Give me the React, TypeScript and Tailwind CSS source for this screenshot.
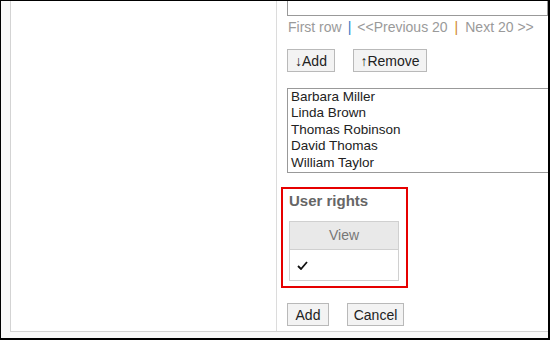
import { Fragment } from "react";

const members = ["Barbara Miller", "Linda Brown", "Thomas Robinson", "David Thomas", "William Taylor"];

const Btn = ({ label, className = "" }: { label: string; className?: string }) => (
  <button
    className={`h-[23px] border border-[#b9b9b9] bg-[#f3f3f3] text-[14px] leading-none text-[#222] ${className}`}
  >
    {label}
  </button>
);

const CheckIcon = () => (
  <svg width="11" height="9" viewBox="0 0 11 9">
    <path d="M1 5 L4 8 L10 1" fill="none" stroke="#111" strokeWidth="1.8" />
  </svg>
);

export default function App() {
  return (
    <div
      className="w-[550px] h-[340px] border border-r-2 border-b-2 border-black bg-[#f9f9f9] flex flex-col"
      style={{ fontFamily: '"Liberation Sans", Arial, sans-serif' }}
    >
      <div className="flex-1 ml-[9px] mb-[6px] flex border-l border-b border-[#d3d3d3] bg-white overflow-hidden">
        {/* left column */}
        <div className="w-[266px] border-r border-[#dcdcdc]" />

        {/* right column */}
        <div className="flex-1 pl-[10px] flex flex-col">
          <div className="h-[15px] border-x border-b border-[#999]" />

          <div className="mt-[3px] h-[17px] flex items-center text-[14px] text-[#9a9a9a] whitespace-nowrap">
            <span className="ml-[1px]">First row</span>
            <span className="mx-[6px] text-[#2f7bc4]">|</span>
            <span>&lt;&lt;Previous 20</span>
            <span className="mx-[7px] text-[#d0862b]">|</span>
            <span>Next 20 &gt;&gt;</span>
          </div>

          <div className="mt-[13px] flex gap-[18px]">
            <Btn label="↓Add" className="w-[48px]" />
            <Btn label="↑Remove" className="w-[74px]" />
          </div>

          <div className="mt-[16px] h-[85px] border border-r-0 border-[#999] pl-[3px] pt-[0px] text-[13.5px] leading-[16.4px] text-[#222]">
            {members.map((m) => (
              <Fragment key={m}>
                <div>{m}</div>
              </Fragment>
            ))}
          </div>

          <div className="mt-[14px] -ml-[6px] w-[127px] h-[101px] border-2 border-[#e60000] pl-[6px] pt-[3px]">
            <div className="text-[15px] font-bold text-[#666] leading-[18px]">User rights</div>
            <table className="mt-[11px] w-[110px] border-collapse text-[14px]">
              <thead>
                <tr>
                  <th className="h-[28px] border border-[#d0d0d0] bg-[#e9e9e9] font-normal text-[#777]">View</th>
                </tr>
              </thead>
              <tbody>
                <tr>
                  <td className="h-[31px] border border-[#d0d0d0] pl-[7px] align-middle">
                    <CheckIcon />
                  </td>
                </tr>
              </tbody>
            </table>
          </div>

          <div className="mt-[15px] flex gap-[18px]">
            <Btn label="Add" className="w-[42px]" />
            <Btn label="Cancel" className="w-[57px]" />
          </div>
        </div>
      </div>
    </div>
  );
}
